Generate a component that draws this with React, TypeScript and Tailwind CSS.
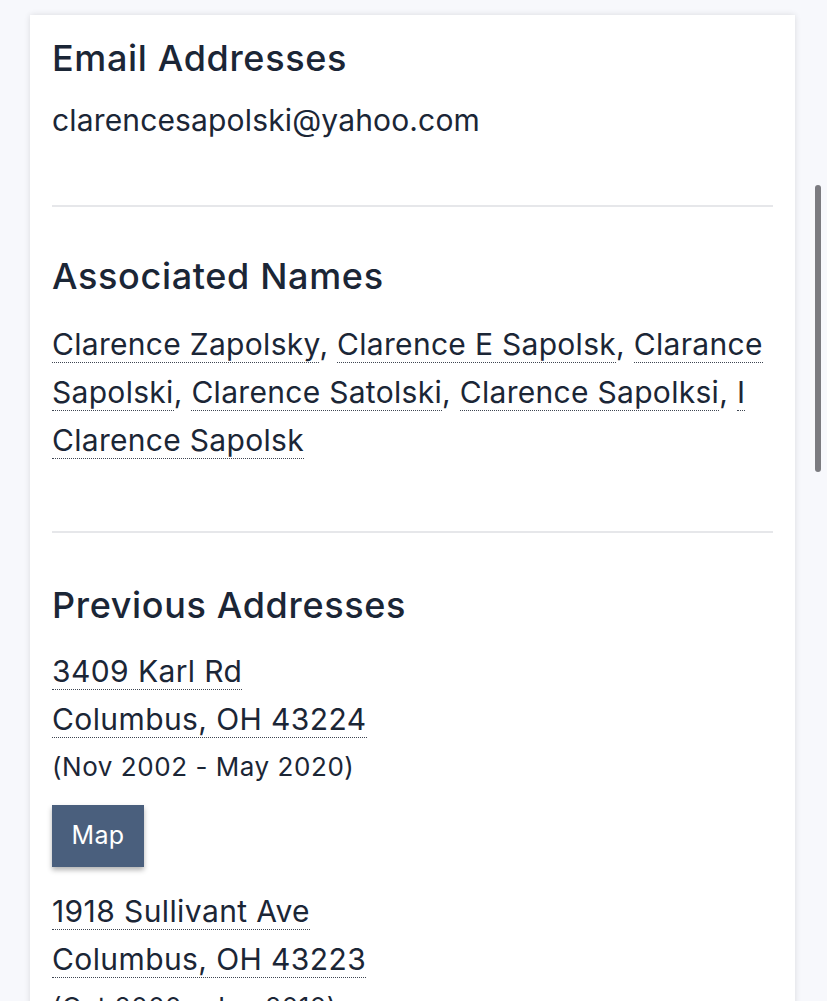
import React from "react";

const names = [
  "Clarence Zapolsky",
  "Clarence E Sapolsk",
  "Clarance Sapolski",
  "Clarence Satolski",
  "Clarence Sapolksi",
  "I Clarence Sapolsk",
];

const addresses = [
  {
    street: "3409 Karl Rd",
    city: "Columbus, OH 43224",
    dates: "(Nov 2002 - May 2020)",
  },
  {
    street: "1918 Sullivant Ave",
    city: "Columbus, OH 43223",
    dates: "(Oct 2000 - Jun 2010)",
  },
];

function Dotted({ children }: { children: React.ReactNode }) {
  return (
    <span className="border-b border-dotted border-[#3f4652]">{children}</span>
  );
}

function Heading({ children }: { children: React.ReactNode }) {
  return (
    <h2 className="text-[36px] leading-[44px] font-medium tracking-[0.65px]">
      {children}
    </h2>
  );
}

export default function App() {
  return (
    <div
      className="relative h-[1001px] w-full overflow-hidden bg-[#f7f8fc] pt-[15px] text-[#1b2636]"
      style={{ fontFamily: "Inter, 'Noto Sans', sans-serif" }}
    >
      <div className="ml-[30px] mr-[32px] bg-white px-[22px] pt-[21px] shadow-[0_0_6px_rgba(0,0,0,0.12)]">
        <section>
          <Heading>Email Addresses</Heading>
          <p className="mt-[20px] text-[30px] leading-[40px] tracking-[0.15px]">
            clarencesapolski@yahoo.com
          </p>
        </section>

        <hr className="mt-[65px] border-t-2 border-[#e6e7ea]" />

        <section className="pt-[47px]">
          <Heading>Associated Names</Heading>
          <p className="mt-[22px] text-[30px] leading-[48px] tracking-[0.3px]">
            {names.map((n, i) => (
              <React.Fragment key={n}>
                <Dotted>{n}</Dotted>
                {i < names.length - 1 ? ", " : null}
              </React.Fragment>
            ))}
          </p>
        </section>

        <hr className="mt-[67px] border-t-2 border-[#e6e7ea]" />

        <section className="pt-[50px]">
          <Heading>Previous Addresses</Heading>
          <div className="mt-[20px]">
            {addresses.map((a, i) => (
              <div key={a.street} className={i > 0 ? "mt-[20px]" : ""}>
                <div className="text-[30px] leading-[48px] tracking-[0.4px]">
                  <Dotted>{a.street}</Dotted>
                </div>
                <div className="text-[30px] leading-[48px] tracking-[0.4px]">
                  <Dotted>{a.city}</Dotted>
                </div>
                <div className="text-[26px] leading-[48px] tracking-[0.55px]">
                  {a.dates}
                </div>
                <button className="mt-[14px] h-[62px] w-[92px] bg-[#4a5f7d] text-[25px] tracking-[0.3px] text-white shadow-[0_3px_5px_rgba(0,0,0,0.3)]">
                  Map
                </button>
              </div>
            ))}
          </div>
        </section>
      </div>

      <div className="absolute right-[6px] top-[185px] h-[287px] w-[6px] rounded-full bg-[#7b7b80]" />
    </div>
  );
}
